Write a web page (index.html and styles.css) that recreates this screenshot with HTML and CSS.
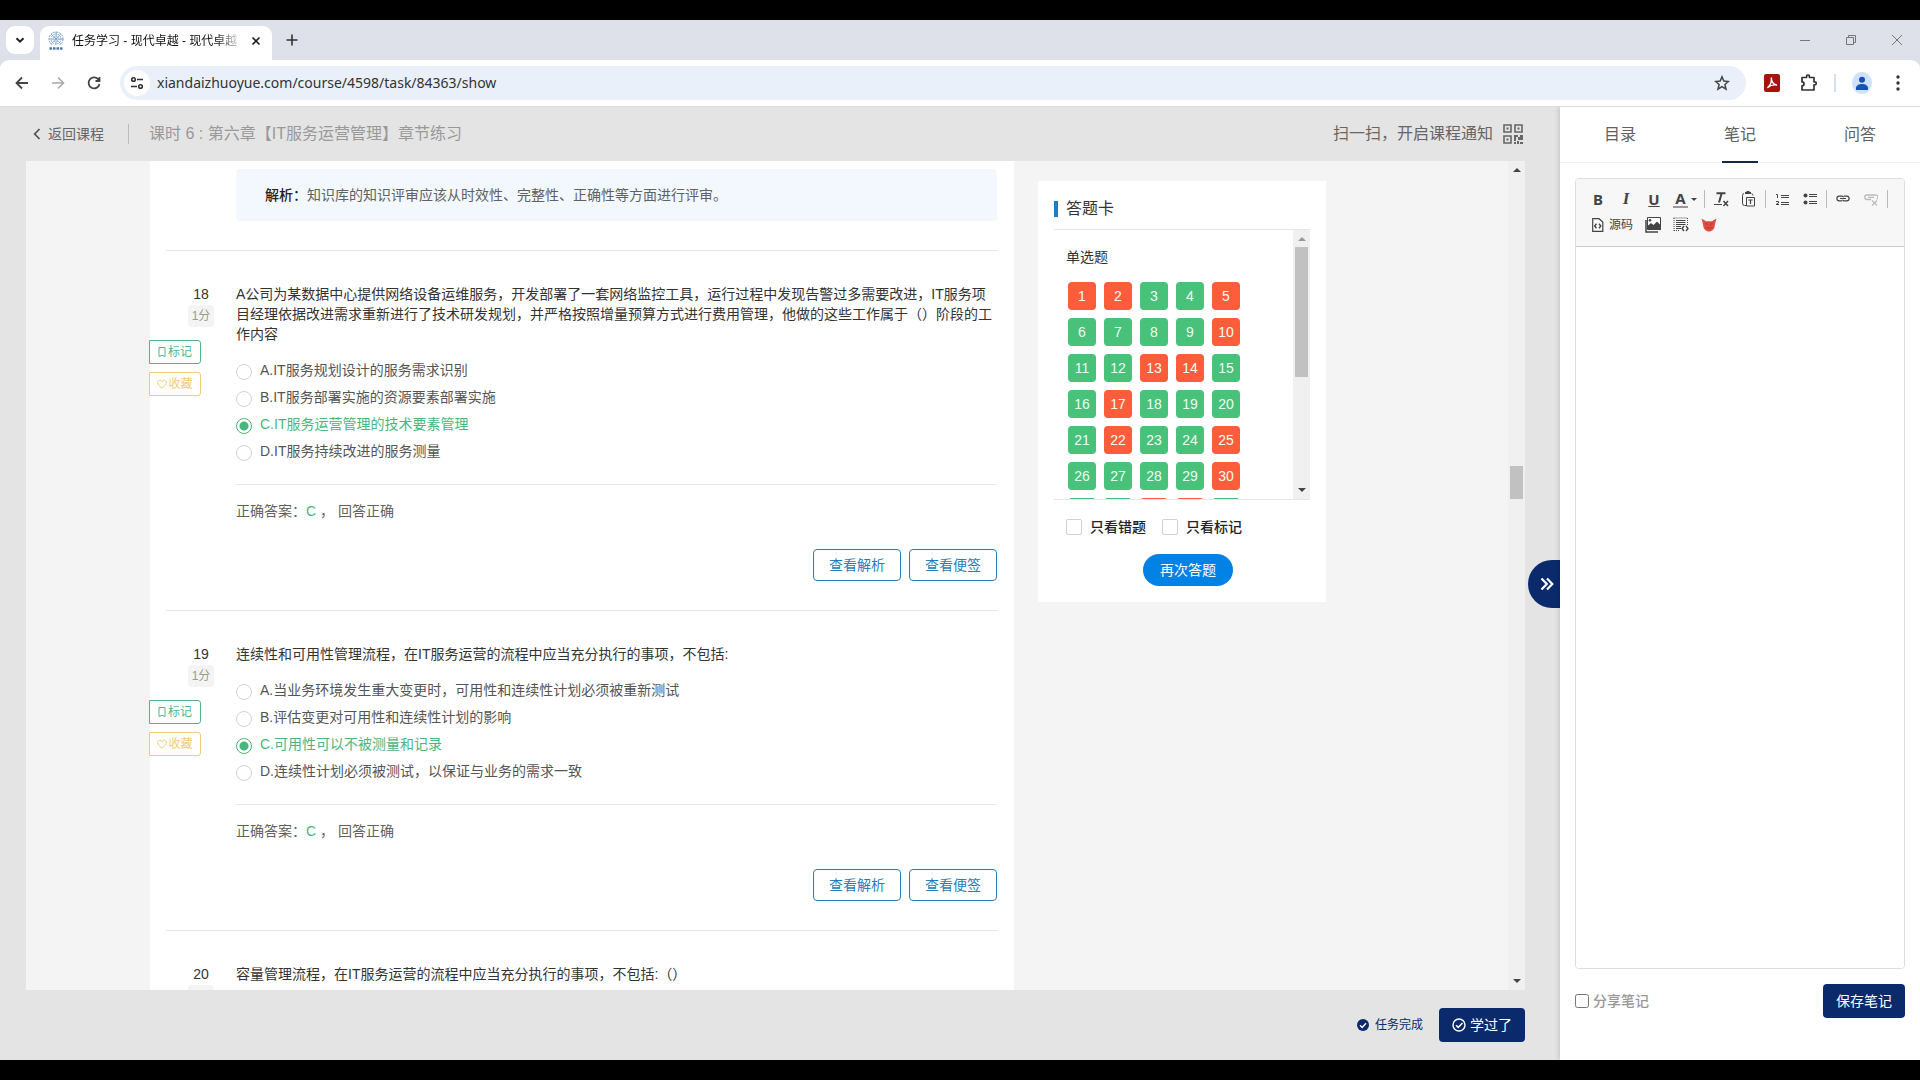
FILE: index.html
```html
<!DOCTYPE html>
<html lang="zh-CN">
<head>
<meta charset="utf-8">
<title>任务学习 - 现代卓越</title>
<link rel="stylesheet" href="styles.css">
</head>
<body>
<div class="window">
  <header class="browser">
    <div class="tabstrip">
      <button class="tab-search" aria-label="搜索标签页"><svg width="12" height="12" viewBox="0 0 12 12"><path d="M2.5 4.2 6 7.7l3.5-3.5" fill="none" stroke="#222" stroke-width="2"/></svg></button>
      <div class="tab">
        <svg width="16" height="20" viewBox="0 0 16 20"><g fill="none" stroke="#6f9cc8"><circle cx="8" cy="8" r="7" stroke-dasharray="2 1"/><circle cx="8" cy="8" r="5" stroke-dasharray="1.5 1"/><circle cx="8" cy="8" r="3" stroke-dasharray="1 1"/><path d="M1 8h14M8 1v14M3 3l10 10M13 3 3 13" stroke-width=".7"/></g><path d="M1 14h14v5H1z" fill="#fff"/><path d="M1.500 17.500h13" stroke="#4878ad" stroke-width="2.500" stroke-dasharray="2.500 1"/></svg>
        <span class="tab-title">任务学习 - 现代卓越 - 现代卓越</span>
        <button class="plain" aria-label="关闭标签页"><svg width="12" height="12" viewBox="0 0 12 12"><path d="m2.500 2.500 7 7m0-7-7 7" stroke="#222" stroke-width="1.700"/></svg></button>
      </div>
      <button class="plain tab-new" aria-label="新标签页"><svg width="12" height="12" viewBox="0 0 12 12"><path d="M6 .5v11M.5 6h11" stroke="#333" stroke-width="1.600"/></svg></button>
      <div class="win-controls">
        <button class="plain" aria-label="最小化"><svg width="12" height="12" viewBox="0 0 12 12"><path d="M1 6.500h10" stroke="#777"/></svg></button>
        <button class="plain" aria-label="还原"><svg width="12" height="12" viewBox="0 0 12 12"><path d="M1.500 3.500h7v7h-7zM3.500 3.500v-2h7v7h-2" fill="none" stroke="#777"/></svg></button>
        <button class="plain" aria-label="关闭"><svg width="12" height="12" viewBox="0 0 12 12"><path d="m1 1 10 10M11 1 1 11" stroke="#777"/></svg></button>
      </div>
    </div>
    <div class="toolbar">
      <div class="nav">
        <button class="plain" aria-label="后退"><svg width="16" height="16" viewBox="0 0 16 16"><path d="M14 8H3M8 2.500 2.500 8 8 13.500" fill="none" stroke="#444" stroke-width="1.800"/></svg></button>
        <button class="plain" aria-label="前进"><svg width="16" height="16" viewBox="0 0 16 16"><path d="M2 8h11M8 2.500 13.500 8 8 13.500" fill="none" stroke="#aaa" stroke-width="1.600"/></svg></button>
        <button class="plain" aria-label="重新加载"><svg width="16" height="16" viewBox="0 0 16 16"><path d="M12.800 5A5.500 5.500 0 1 0 13.500 9M13.500 2v4h-4" fill="none" stroke="#444" stroke-width="1.800"/></svg></button>
      </div>
      <div class="omnibox">
        <button class="site-info" aria-label="网站信息"><svg width="14" height="14" viewBox="0 0 14 14"><g fill="none" stroke="#333" stroke-width="1.600"><circle cx="3.500" cy="3.500" r="1.800"/><path d="M7 3.500h6M1 10.500h6"/><circle cx="10.500" cy="10.500" r="1.800"/></g></svg></button>
        <input class="url" type="text" aria-label="地址" value="xiandaizhuoyue.com/course/4598/task/84363/show">
        <button class="plain" aria-label="收藏此页"><svg width="16" height="16" viewBox="0 0 16 16"><path d="m8 1.800 1.800 4.300 4.600.4-3.500 3 1.100 4.600L8 11.700l-4 2.400 1.100-4.600-3.500-3 4.600-.4z" fill="none" stroke="#444" stroke-width="1.500"/></svg></button>
      </div>
      <div class="extensions">
        <svg width="16" height="18" viewBox="0 0 16 18"><rect width="16" height="18" rx="2" fill="#a8120c"/><path d="M7.300 4c.2 3.800 2 6.300 5.200 7-3.300-.4-6 .2-8.700 2.500C6.700 10.800 8 8 7.300 4z" fill="none" stroke="#fff" stroke-width="1.400" stroke-linejoin="round"/></svg>
        <svg class="puzzle" width="18" height="18" viewBox="0 0 18 18"><path d="M2 3.500h4.500v-.8a1.500 1.500 0 0 1 3 0v.8H14v4.300h.8a1.500 1.500 0 0 1 0 3H14V16H2v-4.200a2 2 0 0 0 0-4z" fill="none" stroke="#333" stroke-width="1.700" stroke-linejoin="round"/></svg>
        <span class="ext-sep"></span>
        <svg width="20" height="22" viewBox="0 0 20 22"><ellipse cx="10" cy="11" rx="10" ry="11" fill="#cfe1fb"/><circle cx="10" cy="7.800" r="3" fill="#1452b8"/><path d="M4 18v-2c0-2.500 3-4 6-4s6 1.500 6 4v2z" fill="#1452b8"/></svg>
        <svg width="16" height="16" viewBox="0 0 16 16" fill="#333"><circle cx="8" cy="2" r="1.700"/><circle cx="8" cy="8" r="1.700"/><circle cx="8" cy="14" r="1.700"/></svg>
      </div>
    </div>
  </header>

  <div class="page">
    <main class="learn">
      <div class="learn-head">
        <a class="back" href="#"><svg width="8" height="12" viewBox="0 0 8 12"><path d="M6.500 1 1.700 6l4.800 5" fill="none" stroke="#555" stroke-width="1.800"/></svg>返回课程</a>
        <h1 class="task-title">课时 6 : 第六章【IT服务运营管理】章节练习</h1>
        <div class="scan">扫一扫，开启课程通知
          <svg width="20" height="20" viewBox="0 0 20 20"><g fill="none" stroke="#666" stroke-width="1.600"><path d="M1 1h7v7H1zM12 1h7v7h-7zM1 12h7v7H1z"/></g><path d="M3.500 3.500h2v2h-2zM14.500 3.500h2v2h-2zM3.500 14.500h2v2h-2zM11 11h2v6h-2zM13 11h2v2h-2zM15 13h2v3h-2zM17 11h3v5h-3zM11 18h2v2h-2zM14 17h2v3h-2zM17 18h3v2h-3z" fill="#666"/></svg>
        </div>
      </div>

      <div class="exam">
        <div class="exam-body">
          <div class="paper">
            <section class="analysis-wrap">
              <p class="analysis"><b>解析：</b>知识库的知识评审应该从时效性、完整性、正确性等方面进行评审。</p>
            </section>

            <section class="question">
              <div class="q-side">
                <span class="q-no">18</span><span class="q-score">1分</span>
                <button class="mark green"><svg width="8" height="10" viewBox="0 0 8 10"><path d="M1 .5h6v9L4 8.300 1 9.500z" fill="none" stroke="currentColor"/></svg>标记</button>
                <button class="mark yellow"><svg width="10" height="10" viewBox="0 0 10 10"><path d="M5 9C2 6.800.6 5.400.6 3.500c0-2.600 3.200-3 4.400-.8 1.200-2.200 4.400-1.800 4.400.8C9.400 5.400 8 6.800 5 9z" fill="none" stroke="currentColor"/></svg>收藏</button>
              </div>
              <div class="q-main">
                <p class="stem">A公司为某数据中心提供网络设备运维服务，开发部署了一套网络监控工具，运行过程中发现告警过多需要改进，IT服务项目经理依据改进需求重新进行了技术研发规划，并严格按照增量预算方式进行费用管理，他做的这些工作属于（）阶段的工作内容</p>
                <div class="options">
                  <label><input type="radio" name="q18">A.IT服务规划设计的服务需求识别</label>
                  <label><input type="radio" name="q18">B.IT服务部署实施的资源要素部署实施</label>
                  <label class="picked"><input type="radio" name="q18" checked>C.IT服务运营管理的技术要素管理</label>
                  <label><input type="radio" name="q18">D.IT服务持续改进的服务测量</label>
                </div>
                <p class="result">正确答案：<span class="right">C</span> ， 回答正确</p>
                <div class="q-actions"><button class="btn-line">查看解析</button><button class="btn-line">查看便签</button></div>
              </div>
            </section>

            <section class="question">
              <div class="q-side">
                <span class="q-no">19</span><span class="q-score">1分</span>
                <button class="mark green"><svg width="8" height="10" viewBox="0 0 8 10"><path d="M1 .5h6v9L4 8.300 1 9.500z" fill="none" stroke="currentColor"/></svg>标记</button>
                <button class="mark yellow"><svg width="10" height="10" viewBox="0 0 10 10"><path d="M5 9C2 6.800.6 5.400.6 3.500c0-2.600 3.200-3 4.400-.8 1.200-2.200 4.400-1.800 4.400.8C9.400 5.400 8 6.800 5 9z" fill="none" stroke="currentColor"/></svg>收藏</button>
              </div>
              <div class="q-main">
                <p class="stem">连续性和可用性管理流程，在IT服务运营的流程中应当充分执行的事项，不包括:</p>
                <div class="options">
                  <label><input type="radio" name="q19">A.当业务环境发生重大变更时，可用性和连续性计划必须被重新测试</label>
                  <label><input type="radio" name="q19">B.评估变更对可用性和连续性计划的影响</label>
                  <label class="picked"><input type="radio" name="q19" checked>C.可用性可以不被测量和记录</label>
                  <label><input type="radio" name="q19">D.连续性计划必须被测试，以保证与业务的需求一致</label>
                </div>
                <p class="result">正确答案：<span class="right">C</span> ， 回答正确</p>
                <div class="q-actions"><button class="btn-line">查看解析</button><button class="btn-line">查看便签</button></div>
              </div>
            </section>

            <section class="question">
              <div class="q-side"><span class="q-no">20</span><span class="q-score" aria-label="1分"></span></div>
              <div class="q-main"><p class="stem">容量管理流程，在IT服务运营的流程中应当充分执行的事项，不包括:（）</p></div>
            </section>
          </div>

          <aside class="card">
            <h2 class="card-title">答题卡</h2>
            <div class="card-scroll">
              <div class="card-list">
                <h3 class="card-sub">单选题</h3>
                <div class="nums">
                  <a class="bad" href="#">1</a><a class="bad" href="#">2</a><a href="#">3</a><a href="#">4</a><a class="bad" href="#">5</a>
                  <a href="#">6</a><a href="#">7</a><a href="#">8</a><a href="#">9</a><a class="bad" href="#">10</a>
                  <a href="#">11</a><a href="#">12</a><a class="bad" href="#">13</a><a class="bad" href="#">14</a><a href="#">15</a>
                  <a href="#">16</a><a class="bad" href="#">17</a><a href="#">18</a><a href="#">19</a><a href="#">20</a>
                  <a href="#">21</a><a class="bad" href="#">22</a><a href="#">23</a><a href="#">24</a><a class="bad" href="#">25</a>
                  <a href="#">26</a><a href="#">27</a><a href="#">28</a><a href="#">29</a><a class="bad" href="#">30</a>
                  <a href="#" aria-label="31"></a><a href="#" aria-label="32"></a><a class="bad" href="#" aria-label="33"></a><a class="bad" href="#" aria-label="34"></a><a href="#" aria-label="35"></a>
                </div>
              </div>
              <div class="bar"><i class="up dim"></i><span class="track"><i class="thumb thumb-card"></i></span><i class="down"></i></div>
            </div>
            <div class="filters">
              <label><input type="checkbox">只看错题</label>
              <label><input type="checkbox">只看标记</label>
            </div>
            <div class="card-foot"><button class="again">再次答题</button></div>
          </aside>
        </div>
        <div class="bar"><i class="up"></i><span class="track track-exam"><i class="thumb thumb-exam"></i></span><i class="down"></i></div>
      </div>

      <div class="learn-foot">
        <span class="done"><svg width="12" height="12" viewBox="0 0 12 12"><circle cx="6" cy="6" r="6" fill="#0a2a6b"/><path d="m3 6.200 2.200 2.200L9 4.200" fill="none" stroke="#fff" stroke-width="1.400"/></svg>任务完成</span>
        <button class="navy"><svg width="14" height="14" viewBox="0 0 14 14"><circle cx="7" cy="7" r="6" fill="none" stroke="#fff" stroke-width="1.400"/><path d="m4 7.200 2.200 2.200L10.500 5" fill="none" stroke="#fff" stroke-width="1.500"/></svg>学过了</button>
      </div>
      <button class="fold" aria-label="收起侧栏"><svg width="14" height="14" viewBox="0 0 14 14"><path d="M1.500 1.500 6.800 7l-5.300 5.500M7 1.500 12.300 7 7 12.500" fill="none" stroke="#fff" stroke-width="2.200"/></svg></button>
    </main>

    <aside class="side">
      <nav class="side-tabs"><a href="#">目录</a><a class="on" href="#">笔记</a><a href="#">问答</a></nav>
      <form class="note">
        <div class="editor">
          <div class="tools">
            <div class="tool-row">
              <button type="button" class="tool t-b" aria-label="加粗">B</button>
              <button type="button" class="tool t-i" aria-label="倾斜">I</button>
              <button type="button" class="tool t-u" aria-label="下划线">U</button>
              <button type="button" class="tool t-a" aria-label="文本颜色"><span>A</span><i class="caret"></i></button>
              <span class="sep"></span>
              <button type="button" class="tool" aria-label="清除格式"><svg width="16" height="16" viewBox="0 0 16 16"><path d="M3.500 2.300h9M8.700 2.300 6 11.500" fill="none" stroke="#444" stroke-width="2"/><path d="M1 13.500h8" stroke="#444"/><path d="m10.500 10 4.500 5m0-5-4.500 5" stroke="#444" stroke-width="1.500"/></svg></button>
              <button type="button" class="tool" aria-label="粘贴为纯文本"><svg width="16" height="16" viewBox="0 0 16 16"><path d="M5 14.500H3.500a2 2 0 0 1-2-2v-8a2 2 0 0 1 1.500-2M10.500 2.500a2 2 0 0 1 1.500 2" fill="none" stroke="#444"/><path d="M4 1h1.500V0h3v1H10v2H4z" fill="#444"/><path d="M5.500 6.500h8v8.500h-8z" fill="none" stroke="#444"/><path d="M7.300 9h4.400M9.500 9v4" stroke="#444" stroke-width="1.200"/></svg></button>
              <span class="sep"></span>
              <button type="button" class="tool" aria-label="编号列表"><svg width="14" height="14" viewBox="0 0 14 14"><path d="M6 3.500h8M6 5.500h8M6 10.500h8M6 12.500h8M1 2.500h1.500V6M1 9.500h2.500v1.500L1 12.500h3" fill="none" stroke="#444"/></svg></button>
              <button type="button" class="tool" aria-label="项目列表"><svg width="14" height="14" viewBox="0 0 14 14"><path d="M6 2.500h8M6 4.500h8M6 9.500h8M6 11.500h8" stroke="#444"/><circle cx="2.500" cy="3.500" r="2" fill="#444"/><circle cx="2.500" cy="10.500" r="2" fill="#444"/></svg></button>
              <span class="sep"></span>
              <button type="button" class="tool" aria-label="插入链接"><svg width="14" height="14" viewBox="0 0 14 14"><g fill="none" stroke="#444" stroke-width="1.200"><path d="M6 4.200H3.200a2.300 2.300 0 0 0 0 4.600H6M8 4.200h2.800a2.300 2.300 0 0 1 0 4.600H8M6 4.200q1.500.3 1.500 1M8 8.800q-1.500-.3-1.500-1M4 6.500h6"/></g></svg></button>
              <button type="button" class="tool" aria-label="取消链接"><svg width="14" height="14" viewBox="0 0 14 14"><g fill="none" stroke="#bbb" stroke-width="1.300"><path d="M7 7.500H3a2 2 0 0 1 0-4.500h8a2 2 0 0 1 1.500 4M4 5.300h6"/><path d="m8 8.500 5 5m0-5-5 5"/></g></svg></button>
              <span class="sep"></span>
            </div>
            <div class="tool-row">
              <button type="button" class="tool t-src"><svg width="12" height="14" viewBox="0 0 12 14"><path d="M1.500.7H7L10.800 4v9.300H.7V.7z" fill="none" stroke="#444" stroke-width="1.200"/><path d="M4.500 5.700 2.700 8l1.800 2.300M7 5.700 8.800 8 7 10.300" fill="none" stroke="#444" stroke-width="1.400"/></svg>源码</button>
              <button type="button" class="tool" aria-label="图片"><svg width="16" height="16" viewBox="0 0 16 16"><path d="M2.500.5h13v12h-13z" fill="#fff" stroke="#444"/><path d="M1 3v12h12" fill="none" stroke="#444" stroke-width="1.500"/><path d="M2.500 12.500V9L6 6l2.500 2L12 4.500l3.500 3.500v5z" fill="#444"/><circle cx="5" cy="3.300" r="1.300" fill="#444"/></svg></button>
              <button type="button" class="tool" aria-label="代码段"><svg width="16" height="16" viewBox="0 0 16 16"><path d="M.5 1h14M1 1v13M14.500 1v7M1 13.500h6" fill="none" stroke="#444" stroke-dasharray="1 1"/><path d="M3 3.500h9.500M3 5.500h9.500M3 7.500h9.500M3 9.500h5M3 11.500h5" stroke="#444"/><path d="m11 9-2 2.500 2 2.500M13 9l2 2.500L13 14" fill="none" stroke="#444" stroke-width="1.400"/></svg></button>
              <button type="button" class="tool" aria-label="表情"><svg width="16" height="14" viewBox="0 0 16 14"><path d="M.5.5 5 3.200h6L15.500.5 13.800 7c0 4-2.800 6.500-5.800 6.500S2.200 11 2.200 7z" fill="#e04a40"/><path d="m4.500 5.500 2.500 1M11.500 5.500l-2.500 1M5.500 9.500q2.500 1.500 5 0" fill="none" stroke="#b03530"/></svg></button>
            </div>
          </div>
          <textarea class="note-text" aria-label="笔记内容"></textarea>
        </div>
        <div class="note-foot">
          <label><input type="checkbox">分享笔记</label>
          <button type="button" class="navy save">保存笔记</button>
        </div>
      </form>
    </aside>
  </div>
</div>
</body>
</html>
```
FILE: styles.css
```css
* { box-sizing: border-box; }
body, p, h1, h2, h3 { margin: 0; font-weight: normal; }
body {
  background: #000;
  color: #333;
  font: 14px/20px "Liberation Sans", "Noto Sans CJK SC", sans-serif;
  text-spacing-trim: space-all;
}
button, input, textarea { font: inherit; color: inherit; }
button { padding: 0; cursor: pointer; }
a { color: inherit; text-decoration: none; }
svg { display: block; flex: none; }

.window { display: flex; flex-direction: column; height: 100vh; padding: 20px 0; }
.plain { display: flex; border: 0; background: none; }

/* Browser frame */
.browser { flex: none; background: #dee1e9; }
.tabstrip { display: flex; align-items: center; height: 40px; padding-left: 6px; }
.tab-search { display: flex; align-items: center; justify-content: center; width: 28px; height: 28px; border: 0; border-radius: 9px; background: #fff; }
.tab { display: flex; align-items: center; align-self: flex-end; gap: 8px; width: 232px; height: 34px; margin-left: 6px; padding: 0 10px 4px 8px; border-radius: 9px 9px 0 0; background: #fff; }
.tab-title { flex: 1; overflow: hidden; color: #111; font-size: 12px; white-space: nowrap; mask-image: linear-gradient(90deg, #000 85%, transparent); }
.tab-new { margin-left: 14px; }
.win-controls { display: flex; gap: 34px; margin-left: auto; padding-right: 17px; }
.toolbar { display: flex; align-items: center; height: 47px; border-bottom: 1px solid #dcdcde; border-radius: 9px 9px 0 0; background: #fff; }
.nav { display: flex; gap: 20px; padding: 0 18px 0 14px; }
.omnibox { display: flex; flex: 1; align-items: center; height: 34px; padding: 0 16px 0 4px; border-radius: 17px; background: #e9f0f9; }
.site-info { display: flex; align-items: center; justify-content: center; width: 26px; height: 26px; border: 0; border-radius: 50%; background: #fff; }
.url { flex: 1; padding: 0 7px; border: 0; outline: 0; background: none; color: #333; font: 14px/20px "Noto Sans", sans-serif; }
.extensions { display: flex; align-items: center; gap: 18px; padding: 0 14px 0 18px; }
.puzzle { margin-left: 2px; }
.ext-sep { width: 2px; height: 18px; margin: 0 -2px; background: #d3e0f3; }

/* Page */
.page { display: flex; flex: 1; min-height: 0; }
.learn { position: relative; display: flex; flex: 1; flex-direction: column; min-width: 0; padding: 0 35px 0 26px; background: #e4e4e4; }
.learn-head { display: flex; flex: none; align-items: center; height: 54px; color: #666; }
.back { display: flex; align-items: center; gap: 7px; padding: 0 24px 0 7px; border-right: 1px solid #bbb; }
.task-title { padding-left: 20px; color: #999; font-size: 16px; }
.scan { display: flex; align-items: center; gap: 10px; margin-left: auto; padding-right: 2px; font-size: 16px; }
.learn-foot { display: flex; flex: none; align-items: center; justify-content: flex-end; gap: 16px; height: 70px; }
.done { display: flex; align-items: center; gap: 6px; color: #0a2a6b; font-size: 12px; }
.navy { display: flex; align-items: center; gap: 4px; height: 34px; padding: 0 13px; border: 0; border-radius: 4px; background: #0a2a6b; color: #fff; }
.fold { position: absolute; top: 50%; right: 0; display: flex; align-items: center; width: 32px; height: 48px; margin-top: -24px; padding-left: 12px; border: 0; border-radius: 24px 0 0 24px; background: #0a2a6b; }

/* Scroll bars */
.bar { display: flex; flex: none; flex-direction: column; align-items: center; width: 17px; padding: 7px 0; background: #f0f0f0; }
.up, .down { border: 4px solid transparent; }
.up { border-top: 0; border-bottom-color: #444; }
.down { border-bottom: 0; border-top-color: #444; }
.up.dim { border-bottom-color: #999; }
.track { flex: 1; padding-top: 6px; }
.track-exam { padding-top: 294px; }
.thumb { display: block; width: 13px; background: #c1c1c1; }
.thumb-card { height: 130px; }
.thumb-exam { height: 33px; }

/* Exam paper */
.exam { display: flex; flex: 1; min-height: 0; background: #f4f4f4; }
.exam-body { display: flex; flex: 1; align-items: flex-start; gap: 24px; min-width: 0; height: 100%; padding: 0 24px 0 124px; overflow: hidden; }
.paper { flex: 0 1 864px; padding: 0 16px; background: #fff; }
.analysis-wrap { padding: 8px 0 29px 70px; border-bottom: 1px solid #e6e6e6; }
.analysis { margin-right: 1px; padding: 16px 29px; border-radius: 4px; background: #f2f8fe; color: #616161; }
.analysis b { color: #222; font-weight: 500; }
.question { display: flex; padding: 33px 1px 29px 0; border-bottom: 1px solid #e6e6e6; }
.q-side { display: flex; flex: none; flex-direction: column; align-items: flex-start; width: 70px; }
.q-no, .q-score { width: 26px; margin-left: 22px; text-align: center; }
.q-score { min-height: 22px; margin: 1px 0 13px 22px; border-radius: 4px; background: #f4f4f4; color: #999; font-size: 12px; line-height: 22px; }
.mark { display: flex; align-items: center; gap: 2px; justify-content: center; width: 52px; height: 24px; margin: 0 0 8px -17px; border: 1px solid; border-radius: 0 3px 3px 0; background: #fff; font-size: 12px; }
.green { color: #4fb883; }
.yellow { gap: 1px; color: #f0cb72; }
.q-main { flex: 1; min-width: 0; }
.options { margin: 12px 0 20px; }
.options label { display: flex; align-items: center; gap: 8px; height: 27px; color: #555; }
.options .picked { color: #48b77c; }
.options input { appearance: none; width: 16px; height: 16px; margin: 4px 0 0; border: 1px solid #d2d2d2; border-radius: 50%; background: #fff; }
.options input:checked { border-color: #48b77c; background: radial-gradient(circle, #48b77c 4px, #fff 5px); }
.result { padding-top: 16px; border-top: 1px solid #e8e8e8; color: #616161; }
.right { color: #48b77c; }
.q-actions { display: flex; justify-content: flex-end; gap: 8px; margin-top: 28px; }
.btn-line { width: 88px; height: 32px; border: 1px solid #2480bd; border-radius: 4px; background: #fff; color: #2480bd; }

/* Answer card */
.card { flex: none; width: 288px; margin-top: 20px; padding: 18px 16px 16px; background: #fff; }
.card-title { display: flex; align-items: center; gap: 8px; margin-bottom: 10px; font-size: 16px; }
.card-title::before { width: 4px; height: 16px; background: #1d7cc4; content: ""; }
.card-scroll { display: flex; height: 271px; border: solid #e6e6e6; border-width: 1px 0; overflow: hidden; }
.card-list { flex: 1; padding: 17px 12px 0; }
.card-sub { margin-bottom: 15px; font-size: 14px; }
.nums { display: grid; grid-template-columns: repeat(5, 28px); gap: 8px; padding-left: 2px; }
.nums a { height: 28px; border-radius: 4px; background: #48c17a; color: #eafff3; line-height: 28px; text-align: center; }
.nums .bad { background: #fe5d3b; }
.filters { display: flex; gap: 16px; margin: 17px 12px; }
.filters label { display: flex; align-items: center; gap: 8px; color: #222; font-weight: 500; }
.filters input { appearance: none; width: 16px; height: 16px; margin: 0; border: 1px solid #d2d2d2; border-radius: 2px; background: #fff; }
.card-foot { padding-left: 12px; text-align: center; }
.again { display: block; width: 90px; height: 32px; margin: 0 auto; border: 0; border-radius: 16px; background: #0382e5; color: #fff; }

/* Notes panel */
.side { position: relative; display: flex; flex: none; flex-direction: column; width: 360px; background: #fff; box-shadow: 0 0 6px rgba(0, 0, 0, .2); clip-path: inset(0 0 0 -8px); }
.side-tabs { display: flex; justify-content: space-around; height: 56px; border-bottom: 1px solid #f0f0f0; color: #616161; font-size: 16px; line-height: 56px; }
.side-tabs a { padding: 0 2px; height: 56px; }
.side-tabs .on { border-bottom: 2px solid #14284a; }
.note { display: flex; flex: 1; flex-direction: column; min-height: 0; padding: 15px 15px 42px; }
.editor { display: flex; flex: 1; flex-direction: column; min-height: 0; border: 1px solid #ddd; border-radius: 4px; overflow: hidden; }
.tools { height: 68px; padding: 7px 10px 0 14px; border-bottom: 1px solid #ccc; background: #f7f7f7; color: #444; }
.tool-row { display: flex; align-items: center; height: 26px; }
.tool { display: flex; flex: none; align-items: center; justify-content: center; width: 28px; height: 24px; border: 0; background: none; }
.tool.t-src { justify-content: flex-start; gap: 5px; width: 49px; padding-left: 2px; font-size: 12px; }
.t-b, .t-i, .t-u, .t-a { font: bold 15px/16px "Noto Sans", sans-serif; }
.tool.t-b { width: 16px; margin-right: 6px; }
.t-i { font-family: "Liberation Serif", serif; font-size: 17px; font-style: italic; }
.t-u { text-decoration: underline; }
.tool.t-a { gap: 3px; width: 34px; }
.t-a span { padding: 0 2px; border-bottom: 2px solid #999; line-height: 15px; }
.caret { border: 3px solid transparent; border-bottom: 0; border-top-color: #444; }
.sep { width: 1px; height: 18px; margin: 0 2px; background: #bbb; }
.note-text { flex: 1; width: 100%; padding: 10px; border: 0; outline: 0; resize: none; background: #fff; }
.note-foot { display: flex; align-items: center; justify-content: space-between; margin-top: 15px; color: #999; }
.note-foot label { display: flex; align-items: center; gap: 4px; font-weight: 500; }
.note-foot input { width: 14px; height: 14px; margin: 0; }
```
